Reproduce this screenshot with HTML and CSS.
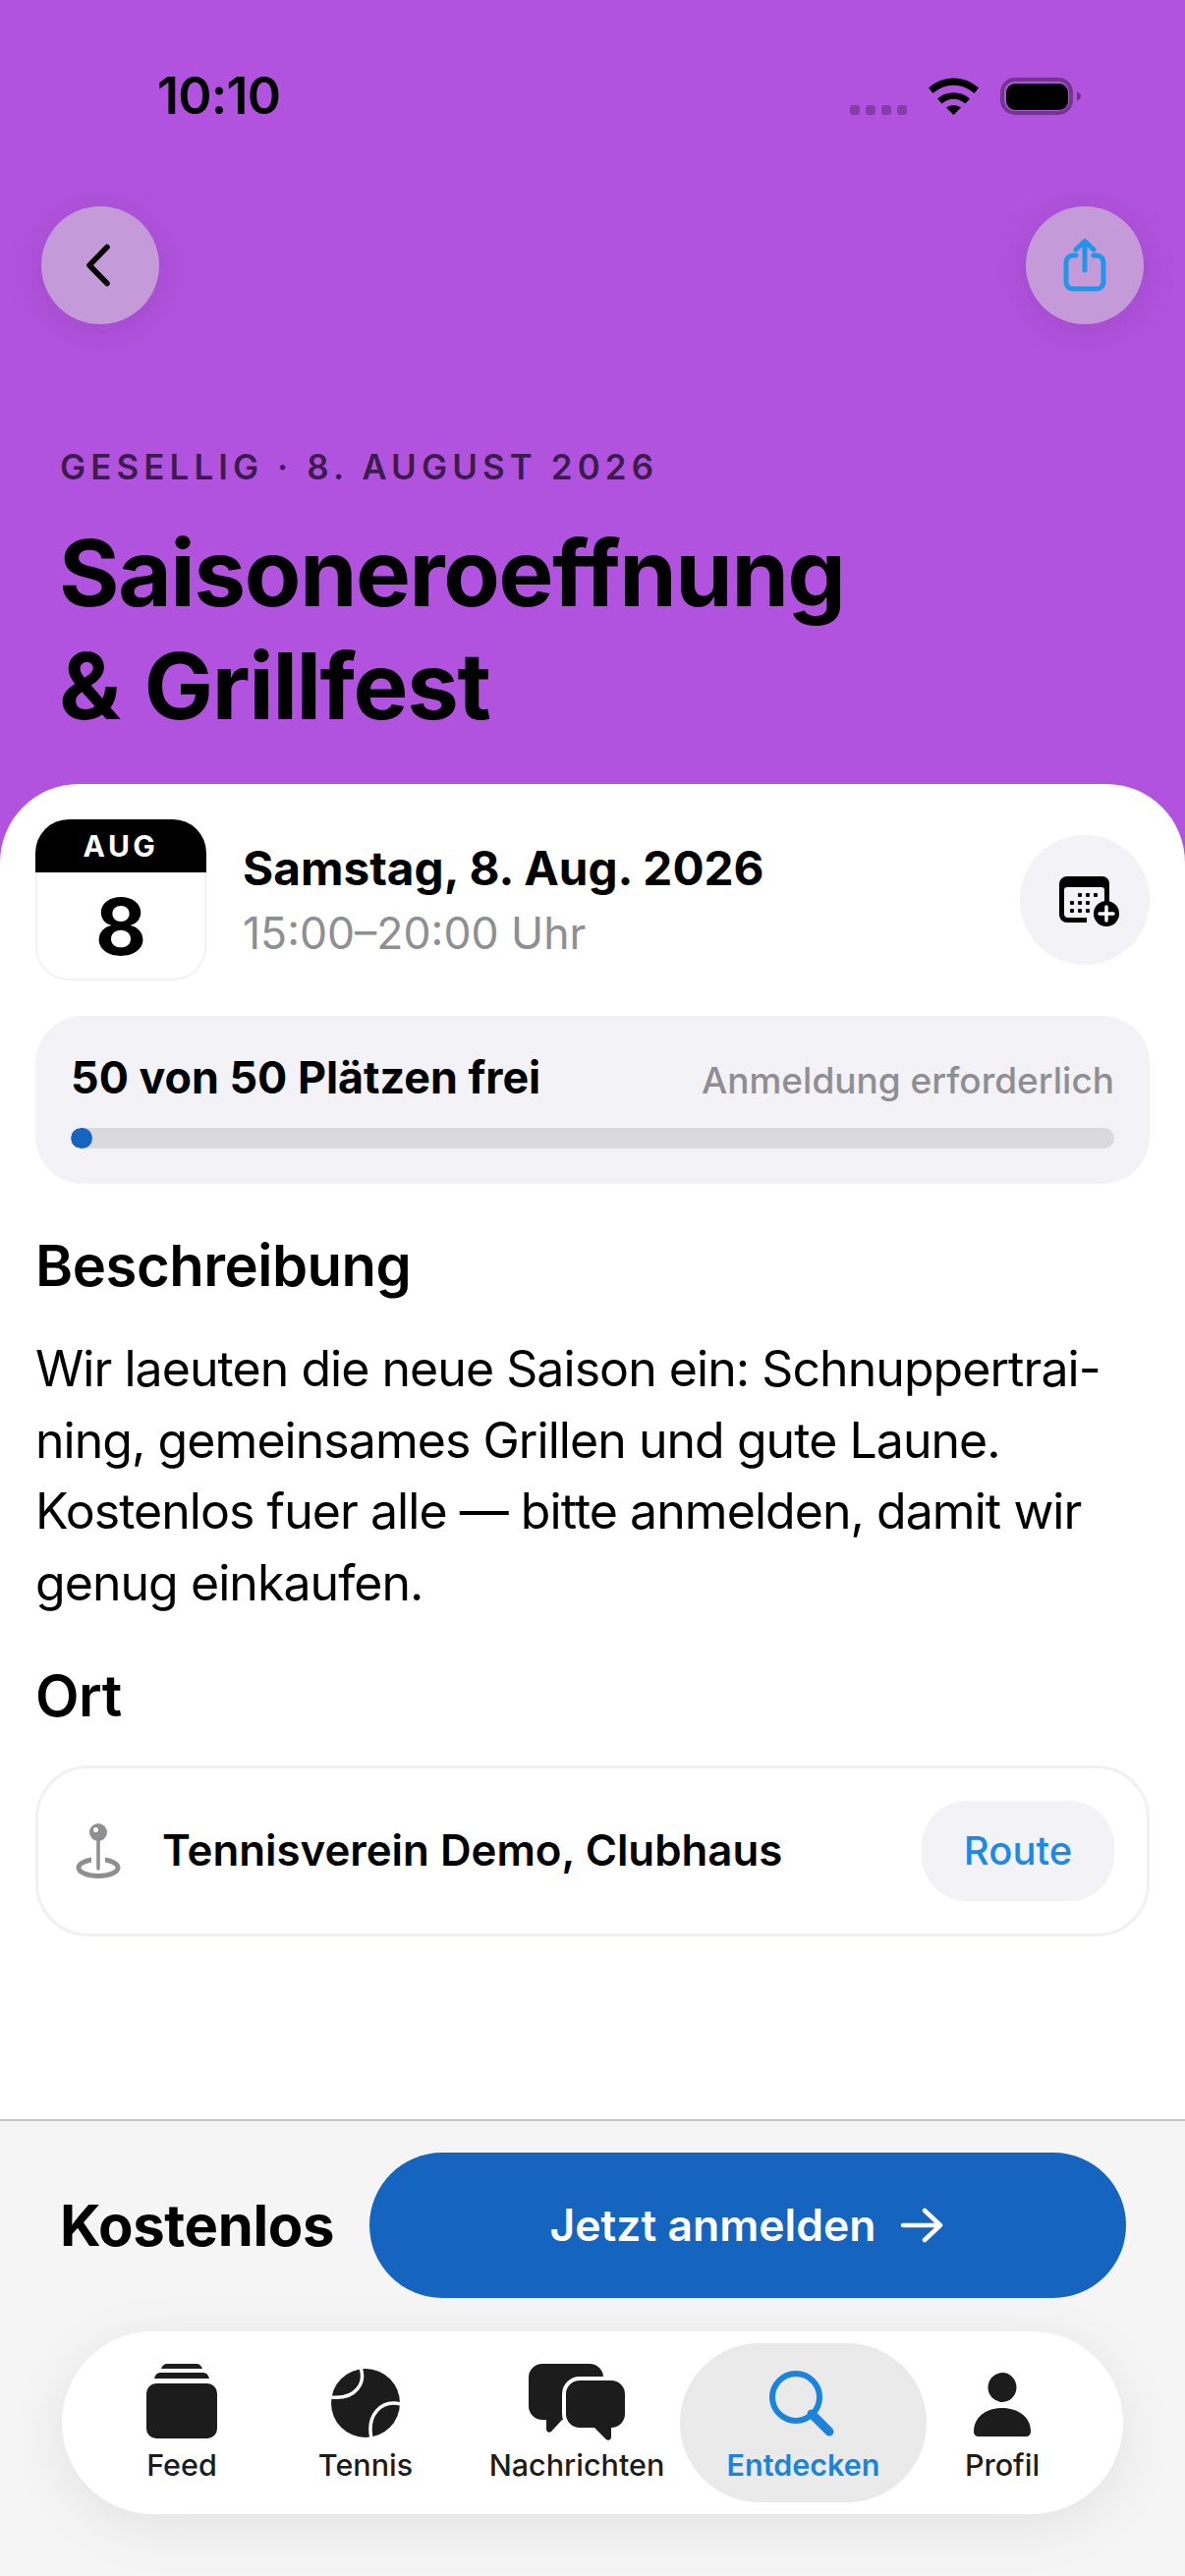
FILE: index.html
```html
<!DOCTYPE html>
<html lang="de">
<head>
<meta charset="utf-8">
<title>Saisoneroeffnung &amp; Grillfest</title>
<link rel="stylesheet" href="styles.css">
</head>
<body>
<div class="screen">
  <header class="hero">
    <div class="status">
      <span class="time">10:10</span>
      <div class="status-icons">
        <svg class="ic-dots" width="58" height="38" viewBox="0 0 58 38"><g fill="#000" fill-opacity=".25"><rect x="0" y="28" width="10" height="10" rx="3"/><rect x="16" y="28" width="10" height="10" rx="3"/><rect x="32" y="28" width="10" height="10" rx="3"/><rect x="48" y="28" width="10" height="10" rx="3"/></g></svg>
        <svg width="51" height="38" viewBox="0 0 51 38"><path d="M0 10.500 C14 -3 37 -3 51 10.500 L46.500 16 C34 5 17 5 4.500 16Z M9 21.500 C18 13 33 13 42 21.500 L37.500 26.500 C30 20 21 20 13.500 26.500Z M18 30.500 C22.500 27 28.500 27 33 30.500 L25.500 38Z" fill="#000"/></svg>
        <svg width="82" height="38" viewBox="0 0 82 38"><rect x="2" y="2" width="70" height="34" rx="13" fill="none" stroke="#000" stroke-opacity=".35" stroke-width="4"/><rect x="6" y="6" width="63" height="27" rx="9" fill="#000"/><path d="M78 14 C81 16 82 17.500 82 19 C82 20.500 81 22 78 24Z" fill="#000" fill-opacity=".4"/></svg>
      </div>
    </div>
    <div class="nav">
      <button class="round" aria-label="Zurück">
        <svg class="back-ic" width="40" height="50" viewBox="0 0 40 50"><path d="M27 6.500 L9 25 L27 43.500" fill="none" stroke="#000" stroke-width="5.500" stroke-linecap="round" stroke-linejoin="round"/></svg>
      </button>
      <button class="round" aria-label="Teilen">
        <svg width="44" height="56" viewBox="0 0 44 56"><path d="M13 18 H10 a7 7 0 0 0 -7 7 V45 a7 7 0 0 0 7 7 H34 a7 7 0 0 0 7 -7 V25 a7 7 0 0 0 -7 -7 H31" fill="none" stroke="#2196E8" stroke-width="5" stroke-linecap="round"/><path d="M22 33 V4 M13 12 L22 3.500 L31 12" fill="none" stroke="#2196E8" stroke-width="5" stroke-linecap="round" stroke-linejoin="round"/></svg>
      </button>
    </div>
    <p class="kicker">GESELLIG · 8. AUGUST 2026</p>
    <h1 class="title">Saisoneroeffnung<br>&amp; Grillfest</h1>
  </header>

  <main class="sheet">
    <section class="date-row">
      <div class="date-card">
        <div class="date-month">AUG</div>
        <div class="date-day">8</div>
      </div>
      <div class="date-text">
        <div class="date-main">Samstag, 8. Aug. 2026</div>
        <div class="date-time">15:00–20:00 Uhr</div>
      </div>
      <button class="cal-btn" aria-label="Zum Kalender">
        <svg width="64" height="54" viewBox="0 0 64 54"><path d="M8 0 H44 a7 7 0 0 1 7 7 V30 H46 V14 a3 3 0 0 0 -3 -3 H8 a3 3 0 0 0 -3 3 V38 a4 4 0 0 0 4 4 H28 V47 H8 a8 8 0 0 1 -8 -8 V8 a8 8 0 0 1 8 -8Z" fill="#000"/><g fill="#000"><rect x="19" y="17" width="4" height="4" rx="1"/><rect x="27" y="17" width="4" height="4" rx="1"/><rect x="35" y="17" width="4" height="4" rx="1"/><rect x="11" y="25" width="4" height="4" rx="1"/><rect x="19" y="25" width="4" height="4" rx="1"/><rect x="27" y="25" width="4" height="4" rx="1"/><rect x="11" y="33" width="4" height="4" rx="1"/><rect x="19" y="33" width="4" height="4" rx="1"/><rect x="27" y="33" width="4" height="4" rx="1"/></g><circle cx="48" cy="38" r="13" fill="#000"/><path d="M48 31 V45 M41 38 H55" stroke="#fff" stroke-width="3.500" stroke-linecap="round"/></svg>
      </button>
    </section>

    <section class="capacity">
      <div class="cap-head">
        <span class="cap-main">50 von 50 Plätzen frei</span>
        <span class="cap-note">Anmeldung erforderlich</span>
      </div>
      <div class="bar"><div class="bar-fill"></div></div>
    </section>

    <h2 class="heading h-desc">Beschreibung</h2>
    <p class="desc">Wir laeuten die neue Saison ein: Schnuppertrai-<br>ning, gemeinsames Grillen und gute Laune.<br>Kostenlos fuer alle — bitte anmelden, damit wir<br>genug einkaufen.</p>
    <h2 class="heading h-place">Ort</h2>

    <div class="place">
      <svg class="pin" width="46" height="56" viewBox="0 0 46 56"><ellipse cx="23" cy="45" rx="20" ry="8.500" fill="none" stroke="#8E8E93" stroke-width="5"/><rect x="16" y="30" width="14" height="10" fill="#fff"/><path d="M23 16 V46" stroke="#8E8E93" stroke-width="3.500" stroke-linecap="round"/><circle cx="23" cy="9" r="9" fill="#8E8E93"/><circle cx="20.500" cy="6.500" r="2.500" fill="#fff"/></svg>
      <span class="place-name">Tennisverein Demo, Clubhaus</span>
      <button class="route">Route</button>
    </div>
  </main>

  <footer class="footer">
    <div class="cta">
      <span class="price">Kostenlos</span>
      <button class="signup">Jetzt anmelden
        <svg width="44" height="36" viewBox="0 0 44 36"><path d="M3 18 H40 M25 3 L41 18 L25 33" fill="none" stroke="#fff" stroke-width="4.500" stroke-linecap="round" stroke-linejoin="round"/></svg>
      </button>
    </div>
    <nav class="tabs">
      <a class="tab tab-feed">
        <svg width="72" height="76" viewBox="0 0 72 76"><rect x="0" y="20" width="72" height="56" rx="10" fill="#1C1C1C"/><path d="M15 5 C16 2 18 0 21 0 H51 C54 0 56 2 57 5Z M8 15 C9 11 11 9 14 9 H58 C61 9 63 11 64 15Z" fill="#1C1C1C"/></svg>
        <span>Feed</span>
      </a>
      <a class="tab tab-tennis">
        <svg width="72" height="72" viewBox="0 0 72 72"><circle cx="36" cy="36" r="35" fill="#1C1C1C"/><path d="M31 0 C36 14 28 33 0 30 M72 37 C52 32 37 48 42 72" fill="none" stroke="#fff" stroke-width="3.500"/></svg>
        <span>Tennis</span>
      </a>
      <a class="tab tab-chat">
        <svg width="98" height="78" viewBox="0 0 98 78"><path d="M14 0 H62 a14 14 0 0 1 14 14 V43 a14 14 0 0 1 -14 14 H34 L23 69 a3 3 0 0 1 -5 -2 V57 H14 a14 14 0 0 1 -14 -14 V14 a14 14 0 0 1 14 -14Z" fill="#1C1C1C"/><path d="M52 17 H84 a14 14 0 0 1 14 14 V51 a14 14 0 0 1 -14 14 V75 a3 3 0 0 1 -5 2 L67 65 H52 a14 14 0 0 1 -14 -14 V31 a14 14 0 0 1 14 -14Z" fill="#1C1C1C" stroke="#fff" stroke-width="8" paint-order="stroke"/></svg>
        <span>Nachrichten</span>
      </a>
      <a class="tab tab-active">
        <svg width="72" height="72" viewBox="0 0 72 72"><circle cx="28" cy="28" r="24" fill="none" stroke="#1A84DC" stroke-width="6"/><path d="M44 45 L62 63" stroke="#1A84DC" stroke-width="9" stroke-linecap="round"/></svg>
        <span>Entdecken</span>
      </a>
      <a class="tab tab-profile">
        <svg width="60" height="66" viewBox="0 0 60 66"><ellipse cx="30" cy="15" rx="14.500" ry="15" fill="#1C1C1C"/><path d="M1 60 C1 45 14 36 30 36 C46 36 59 45 59 60 C59 63 57 65 54 65 H6 C3 65 1 63 1 60Z" fill="#1C1C1C"/></svg>
        <span>Profil</span>
      </a>
    </nav>
  </footer>
</div>
</body>
</html>
```
FILE: styles.css
```css
* { box-sizing: border-box; }
html, body { margin: 0; padding: 0; }
body { width: 1206px; height: 2622px; overflow: hidden; font-family: "Inter", "Noto Sans", sans-serif; color: #000; }
button { font-family: inherit; border: 0; padding: 0; cursor: pointer; }
p, h1, h2 { margin: 0; }

.screen { width: 1206px; height: 2622px; background: #B153DE; display: flex; flex-direction: column; }

.hero { height: 798px; flex: none; }
.status { height: 196px; padding: 0 106px 0 160px; display: flex; align-items: center; justify-content: space-between; }
.time { font-size: 52px; font-weight: 600; letter-spacing: -.8px; line-height: 60px; }
.status-icons { display: flex; gap: 22px; height: 38px; }
.nav { margin-top: 14px; padding: 0 42px; display: flex; justify-content: space-between; }
.round { width: 120px; height: 120px; border-radius: 50%; background: rgba(214, 214, 214, .55); box-shadow: 0 6px 40px rgba(0, 0, 0, .1); display: flex; align-items: center; justify-content: center; }
.kicker { margin-top: 123px; padding-left: 61px; font-size: 35px; line-height: 44px; font-weight: 600; letter-spacing: 5.050px; color: rgba(0, 0, 0, .66); }
.title { margin-top: 29px; padding-left: 60px; font-size: 94px; line-height: 115px; font-weight: 700; letter-spacing: -1.400px; word-spacing: 4px; }

.sheet { flex: 1; background: #fff; border-radius: 80px 80px 0 0; padding: 36px 36px 0; }

.date-row { display: flex; align-items: center; }
.date-card { width: 174px; height: 164px; flex: none; display: flex; flex-direction: column; }
.date-month { height: 54px; border-radius: 34px 34px 0 0; background: #000; color: #fff; font-size: 30px; font-weight: 700; letter-spacing: 3.500px; text-align: center; line-height: 54px; }
.date-day { flex: 1; border: 2px solid #F2F2F4; border-top: 0; border-radius: 0 0 34px 34px; font-size: 80px; font-weight: 700; line-height: 1; display: flex; align-items: center; justify-content: center; padding-top: 2px; }
.date-text { margin-left: 37px; padding-top: 2px; flex: 1; }
.date-main { font-size: 47.700px; font-weight: 700; line-height: 65px; }
.date-time { font-size: 44.500px; line-height: 65px; padding-top: 1px; color: #8E8E93; }
.cal-btn { width: 132px; height: 132px; border-radius: 50%; background: #F2F2F7; display: flex; align-items: center; justify-content: center; padding-left: 12px; padding-top: 6px; }

.capacity { margin-top: 36px; height: 171px; padding: 36px 36px 0; border-radius: 48px; background: #F2F2F7; }
.cap-head { display: flex; justify-content: space-between; align-items: baseline; height: 54px; }
.cap-main { font-size: 44.800px; font-weight: 700; line-height: 54px; }
.cap-note { font-size: 37px; font-weight: 500; color: #8E8E93; line-height: 54px; }
.bar { margin-top: 24px; height: 21px; border-radius: 11px; background: #D9D9DE; overflow: hidden; }
.bar-fill { width: 22px; height: 21px; border-radius: 11px; background: #1565C0; }

.heading { font-size: 58px; line-height: 66px; font-weight: 600; letter-spacing: -.5px; }
.h-desc { margin-top: 50px; }
.desc { margin-top: 36px; font-size: 50px; line-height: 72.700px; letter-spacing: -.95px; }
.h-place { margin-top: 45px; }

.place { margin-top: 38px; height: 174px; border: 3px solid #F1F1F3; border-radius: 54px; padding: 0 33px 0 38px; display: flex; align-items: center; }
.pin { flex: none; }
.place-name { margin-left: 42px; flex: 1; font-size: 43.800px; font-weight: 600; }
.route { width: 196px; height: 102px; border-radius: 46px; background: #F2F2F7; color: #1E88E5; font-size: 40px; font-weight: 500; }

.footer { height: 465px; flex: none; background: #F5F5F5; border-top: 2px solid #C4C4C4; padding-top: 32px; }
.cta { display: flex; align-items: center; justify-content: space-between; padding: 0 60px 0 61px; }
.price { font-size: 58px; font-weight: 700; letter-spacing: -.4px; }
.signup { width: 770px; height: 148px; padding-right: 3px; border-radius: 74px; background: #1565C0; color: #fff; font-size: 44.500px; font-weight: 600; display: flex; align-items: center; justify-content: center; gap: 24px; }
.tabs { margin: 34px 63px 0; height: 186px; border-radius: 93px; background: #fff; box-shadow: 0 12px 60px rgba(0, 0, 0, .08); padding: 12px 46px 12px 45px; display: flex; }
.tab { height: 162px; display: flex; flex-direction: column; align-items: center; color: #1C1C1C; font-size: 30.500px; font-weight: 500; }
.tab span { margin-top: auto; line-height: 40px; margin-bottom: 18px; }
.tab svg { margin-top: 21px; flex: none; }
.tab-feed { width: 154px; }
.tab-tennis { width: 220px; }
.tab-chat { width: 210px; }
.tab-active { width: 251px; background: #EAEAEA; border-radius: 81px; color: #1A84DC; font-weight: 600; }
.tab-profile { width: 154px; }
.tab-tennis svg { margin-top: 25px; }
.tab-active svg { margin-top: 27px; }
.tab-profile svg { margin-top: 30px; }
```
